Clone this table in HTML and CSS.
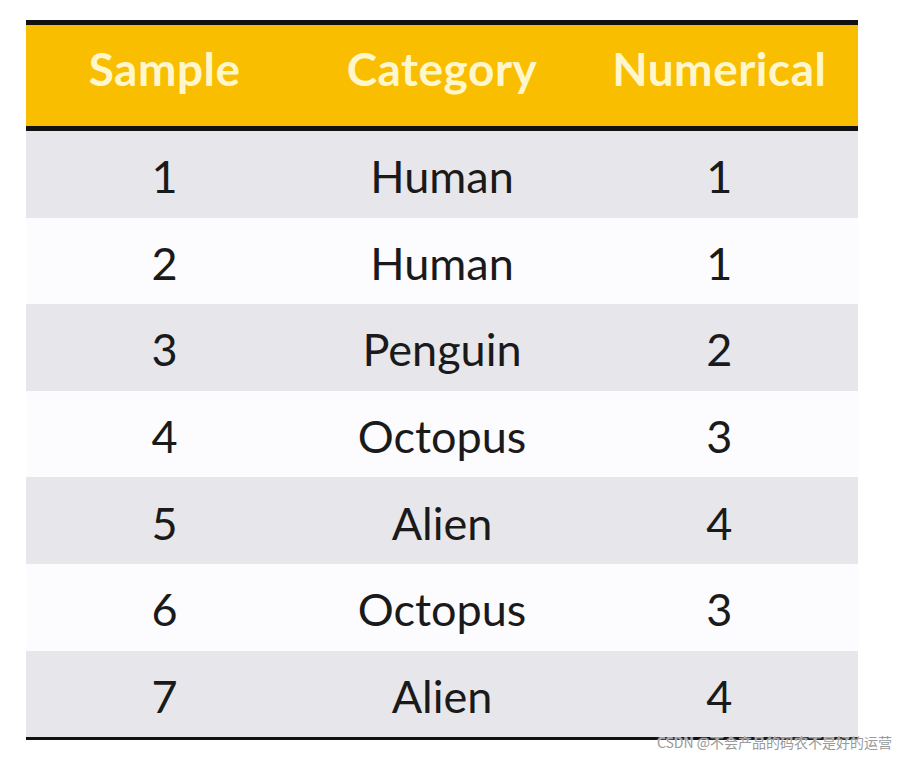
FILE: index.html
```html
<!DOCTYPE html>
<html lang="en">
<head>
<meta charset="utf-8">
<title>Sample table</title>
<link rel="stylesheet" href="styles.css">
</head>
<body>
<div class="page">
  <div class="table">
    <div class="row head">
      <div class="cell">Sample</div>
      <div class="cell">Category</div>
      <div class="cell">Numerical</div>
    </div>
    <div class="row odd"><div class="cell">1</div><div class="cell">Human</div><div class="cell">1</div></div>
    <div class="row even"><div class="cell">2</div><div class="cell">Human</div><div class="cell">1</div></div>
    <div class="row odd"><div class="cell">3</div><div class="cell">Penguin</div><div class="cell">2</div></div>
    <div class="row even"><div class="cell">4</div><div class="cell">Octopus</div><div class="cell">3</div></div>
    <div class="row odd"><div class="cell">5</div><div class="cell">Alien</div><div class="cell">4</div></div>
    <div class="row even"><div class="cell">6</div><div class="cell">Octopus</div><div class="cell">3</div></div>
    <div class="row odd"><div class="cell">7</div><div class="cell">Alien</div><div class="cell">4</div></div>
  </div>
  <div class="watermark">CSDN @不会产品的码农不是好的运营</div>
</div>
</body>
</html>
```
FILE: styles.css
```css
html, body {
  margin: 0;
  padding: 0;
  background: #ffffff;
}
.page {
  position: relative;
  width: 908px;
  height: 758px;
  padding: 20px 0 0 26px;
  box-sizing: border-box;
}
.table {
  width: 832px;
  border-top: 5px solid #111;
  border-bottom: 3px solid #111;
  font-family: Lato, "Open Sans", sans-serif;
  color: #1a1a1a;
}
.row {
  display: grid;
  grid-template-columns: 1fr 1fr 1fr;
  height: 86.6px;
  align-items: center;
}
.cell {
  text-align: center;
  font-size: 45px;
  line-height: 1;
  padding-top: 5px;
}
.head {
  height: 101px;
  background: #f9be00;
  border-bottom: 5px solid #111;
}
.head .cell {
  font-weight: 700;
  color: #fff6cc;
  font-size: 46px;
  padding-top: 0;
  padding-bottom: 14px;
  letter-spacing: 0.5px;
}
.odd { background: #e7e6ea; }
.even { background: #fcfbfd; }
.watermark {
  position: absolute;
  right: 16px;
  top: 732px;
  font-family: "Noto Sans CJK SC", "Noto Sans", sans-serif;
  font-size: 14px;
  color: #9a9a9a;
  text-shadow: 0 0 2px #fff, 0 0 1px #fff;
  line-height: 20px;
}
```
